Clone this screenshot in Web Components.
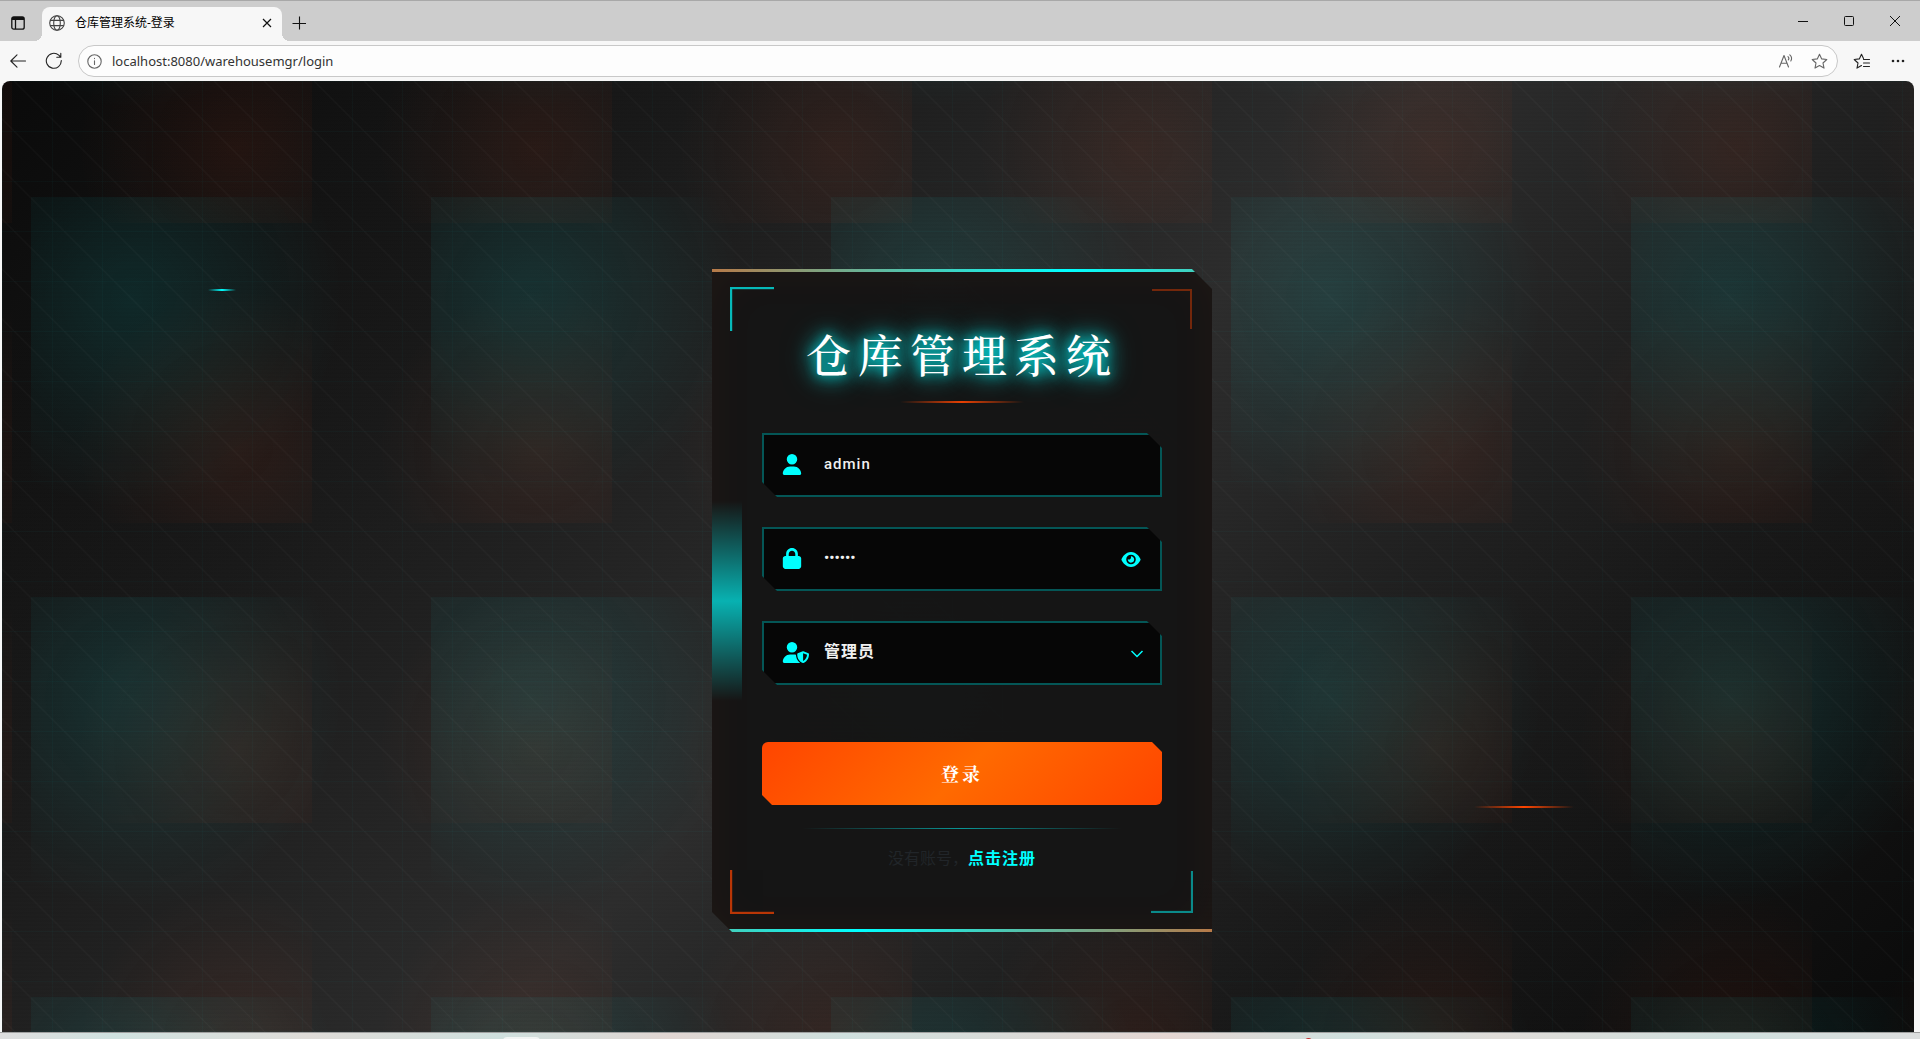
<!DOCTYPE html>
<html lang="zh-CN">
<head>
<meta charset="utf-8">
<meta name="viewport" content="width=device-width, initial-scale=1">
<title>仓库管理系统-登录</title>
<style>
  html, body { height: 100%; }
  body {
    margin: 0;
    display: flex;
    flex-direction: column;
    background: #f7f7f7;
    font-family: "Noto Sans", "Noto Sans CJK SC", sans-serif;
    overflow: hidden;
  }
  login-stage { flex: 1; }
</style>
</head>
<body>
<browser-tabs>仓库管理系统-登录</browser-tabs>
<browser-toolbar url="localhost:8080/warehousemgr/login"></browser-toolbar>
<login-stage><login-card heading="仓库管理系统"></login-card></login-stage>
<desktop-edge></desktop-edge>

<script>
const define = (name, html, setup) => {
  const template = document.createElement('template');
  template.innerHTML = html;
  customElements.define(name, class extends HTMLElement {
    constructor() {
      super();
      this.attachShadow({ mode: 'open' }).append(template.content.cloneNode(true));
    }
    connectedCallback() { if (setup) setup(this, this.shadowRoot); }
  });
};

/* Tab strip with window controls */
define('browser-tabs', `
<style>
  :host { display: flex; align-items: stretch; height: 41px; box-sizing: border-box; background: #cdcdcd; border-top: 1px solid #a8a8a8; color: #111; padding-top: 6px; }
  button { border: 0; padding: 0; margin: 0; background: none; color: inherit; display: flex; align-items: center; justify-content: center; }
  svg { display: block; fill: none; stroke: currentColor; }
  .menu { width: 36px; padding-bottom: 3px; }
  .tab { position: relative; display: flex; align-items: center; gap: 10px; box-sizing: border-box; width: 240px; margin-left: 6px; padding: 0 10px 2px 7px; border-radius: 8px 8px 0 0; background: #f7f7f7; }
  .tab::before, .tab::after { content: ""; position: absolute; bottom: 0; width: 8px; height: 8px; }
  .tab::before { right: 100%; background: radial-gradient(circle at 0 0, transparent 8px, #f7f7f7 8px); }
  .tab::after { left: 100%; background: radial-gradient(circle at 100% 0, transparent 8px, #f7f7f7 8px); }
  .name { flex: 1; font-size: 12px; line-height: 16px; color: #000; white-space: nowrap; }
  .tab .globe { color: #444; }
  .plus { width: 34px; padding-bottom: 2px; }
  .controls { margin-left: auto; display: flex; padding-right: 2px; }
  .controls button { width: 46px; padding-bottom: 6px; }
</style>
<button class="menu" aria-label="标签页操作">
  <svg width="14" height="14" viewBox="0 0 14 14" stroke-width="1.3"><rect x=".8" y=".8" width="12.4" height="12.4" rx="2"/><path d="M1 2.500h12" stroke-width="3"/><path d="M4.500 3v10"/></svg>
</button>
<div class="tab">
  <svg class="globe" width="16" height="16" viewBox="0 0 16 16" stroke-width="1.1"><circle cx="8" cy="8" r="7.3"/><ellipse cx="8" cy="8" rx="3.3" ry="7.3"/><path d="M1.2 5.4h13.6M1.2 10.6h13.6"/></svg>
  <span class="name"><slot></slot></span>
  <button aria-label="关闭标签页"><svg width="10" height="10" viewBox="0 0 10 10" stroke-width="1.2"><path d="M1 1l8 8M9 1l-8 8"/></svg></button>
</div>
<button class="plus" aria-label="新建标签页"><svg width="14" height="14" viewBox="0 0 14 14" stroke-width="1.1"><path d="M7.500 .5v13M.5 7.500h14"/></svg></button>
<div class="controls">
  <button aria-label="最小化"><svg width="10" height="10" viewBox="0 0 10 10"><path d="M0 5.500h10"/></svg></button>
  <button aria-label="最大化"><svg width="10" height="10" viewBox="0 0 10 10"><rect x=".5" y=".5" width="9" height="9" rx="1"/></svg></button>
  <button aria-label="关闭"><svg width="10" height="10" viewBox="0 0 10 10"><path d="M0 0l10 10M10 0L0 10"/></svg></button>
</div>`);

/* Navigation buttons and address field */
define('browser-toolbar', `
<style>
  :host { display: flex; align-items: center; height: 40px; background: #f7f7f7; color: #222; padding-right: 4px; }
  button { border: 0; padding: 0; margin: 0; background: none; color: inherit; display: flex; align-items: center; justify-content: center; width: 36px; height: 32px; }
  svg { display: block; fill: none; stroke: currentColor; stroke-width: 1.1; stroke-linejoin: round; stroke-linecap: round; }
  .address { flex: 1; display: flex; align-items: center; box-sizing: border-box; height: 32px; margin: 0 6px; padding-right: 2px; border: 1px solid #c8c8c8; border-radius: 16px; background: #fdfdfd; }
  .address button { height: 30px; width: 32px; color: #666; }
  .address button.info { width: 30px; }
  input { flex: 1; min-width: 0; border: 0; padding: 0 0 0 3px; outline: 0; background: none; color: #333; font: 13px/20px "Noto Sans", sans-serif; }
</style>
<button aria-label="后退"><svg width="16" height="14" viewBox="0 0 16 14"><path d="M15.500 7H1M7 .8L.8 7l6.200 6.200"/></svg></button>
<button aria-label="刷新"><svg width="18" height="18" viewBox="0 0 18 18"><path d="M16.300 8.500A7.500 7.500 0 1 1 13.800 3.200L15.500 5M15.800 1.300V5.200H11.800"/></svg></button>
<div class="address">
  <button class="info" aria-label="站点信息"><svg width="15" height="15" viewBox="0 0 15 15"><circle cx="7.500" cy="7.500" r="6.700"/><path d="M7.500 6.800v3.700M7.500 4.400v.2"/></svg></button>
  <input id="url" type="text" aria-label="地址" spellcheck="false">
  <button aria-label="大声朗读"><svg width="18" height="16" viewBox="0 0 18 16"><path d="M1.500 14L6 2.500 10.500 14M3 10.200h6M10 3.600c1 .9 1 2.300.3 3.200M11.800 1.800c2 1.700 2.200 4 1 6.200"/></svg></button>
  <button aria-label="收藏"><svg width="17" height="17" viewBox="0 0 17 17"><path d="M8.500 1.200l2.200 4.700 5.100.6-3.800 3.500 1 5.100-4.500-2.500L4 15.100l1-5.100L1.200 6.500l5.100-.6z"/></svg></button>
</div>
<button aria-label="收藏夹"><svg width="18" height="17" viewBox="0 0 18 17"><path d="M8.500 12.500l-4.500 2.600 1-5.100L1.200 6.500l5.100-.6 2.200-4.700 2 4.200M10.500 6.500h6M10.500 10h6M10.500 13.500h6"/></svg></button>
<button aria-label="更多"><svg width="14" height="4" viewBox="0 0 14 4" style="fill:currentColor;stroke:none"><circle cx="2" cy="2" r="1.300"/><circle cx="7" cy="2" r="1.300"/><circle cx="12" cy="2" r="1.300"/></svg></button>`,
(host, root) => { root.getElementById('url').value = host.getAttribute('url'); });

/* Dark backdrop: base gradient, glow tiles, diagonal hatch, grid, scan lines */
define('login-stage', `
<style>
  :host { display: flex; justify-content: center; align-items: flex-start; position: relative; box-sizing: border-box; min-height: 0; margin: 0 6px 0 2px; padding: 188px 0 0 8px; border-radius: 8px 8px 0 0; overflow: hidden;
    background:
      repeating-linear-gradient(0deg, transparent 0 2px, rgba(0,0,0,.03) 2px 4px),
      linear-gradient(90deg, rgba(0,255,255,.025) 1px, transparent 1px) 0 0 / 50px 50px,
      linear-gradient(rgba(0,255,255,.025) 1px, transparent 1px) 0 0 / 50px 50px,
      linear-gradient(45deg, transparent 48%, rgba(255,255,255,.025) 50%, transparent 52%) 12px 0 / 50px 50px,
      radial-gradient(circle at 25% 25%, rgba(0,255,255,.1) 0, transparent 50%) 29px 116px / 400px 400px,
      radial-gradient(circle at 75% 75%, rgba(255,64,16,.08) 0, transparent 50%) 10px 142px / 300px 300px,
      linear-gradient(135deg, #0a0a0a 0, #1a1a1a 25%, #2d2d2d 50%, #1a1a1a 75%, #0a0a0a 100%);
  }
  .spark { position: absolute; height: 2px; }
  .cyan { left: 206px; top: 208px; width: 28px; background: linear-gradient(90deg, transparent, #0ff, transparent); }
  .orange { left: 1472px; top: 725px; width: 100px; background: linear-gradient(90deg, transparent, #ff4500, transparent); }
</style>
<i class="spark cyan"></i><i class="spark orange"></i>
<slot></slot>`);

/* Notched field frame: slots for the icon label, the control and an action */
define('cyber-field', `
<style>
  :host { display: flex; align-items: center; box-sizing: border-box; height: 64px; padding: 0 18px; border: 2px solid rgba(0,255,255,.32); background: #060606;
    clip-path: polygon(0 0, calc(100% - 15px) 0, 100% 15px, 100% 100%, 15px 100%, 0 calc(100% - 15px)); }
  .icon { flex: none; width: 42px; color: #0ff; }
  .control { flex: 1; min-width: 0; display: flex; padding-bottom: 2px; }
  .action { color: #0ff; display: flex; }
</style>
<div class="icon"><slot name="icon"></slot></div>
<div class="control"><slot></slot></div>
<div class="action"><slot name="action"></slot></div>`);

define('login-card', `
<style>
  :host { display: block; position: relative; box-sizing: border-box; width: 500px; max-width: 100%; padding: 52px 50px 63px; background: rgba(21,21,21,.97);
    box-shadow: inset 0 0 50px rgba(255,69,0,.05);
    clip-path: polygon(0 0, calc(100% - 20px) 0, 100% 20px, 100% 100%, 20px 100%, 0 calc(100% - 20px)); }
  .edge { position: absolute; left: 0; right: 0; height: 3px; background: linear-gradient(90deg, #ff4500 -28%, #0ff 71%, #ff4500 170%); }
  .edge.top { top: 0; }
  .edge.bottom { bottom: 0; background: linear-gradient(270deg, #ff4500 -28%, #0ff 71%, #ff4500 170%); }
  .corner { position: absolute; box-sizing: border-box; width: 40px; height: 40px; border: 0 solid #0ff; }
  .tl { top: 20px; left: 20px; border-width: 2px 0 0 2px; opacity: .7; transform: scale(1.1); }
  .tr { top: 20px; right: 20px; border-width: 2px 2px 0 0; border-color: #ff4500; opacity: .4; }
  .bl { bottom: 20px; left: 20px; border-width: 0 0 2px 2px; border-color: #ff4500; opacity: .7; transform: scale(1.1); }
  .br { bottom: 20px; right: 20px; border-width: 0 2px 2px 0; opacity: .5; transform: scale(1.05); }
  .beam { position: absolute; left: 0; top: calc(50% - 100px); width: 30px; height: 200px; opacity: .67; background: linear-gradient(transparent, #0ff, transparent); }
  h1 { margin: 0; font: 500 45px/66px "Noto Serif CJK SC", "Noto Serif SC", "Source Han Serif SC", "Noto Sans CJK SC", serif; letter-spacing: 7px; text-align: center; white-space: nowrap; color: #fff; text-shadow: 0 0 12px rgba(0,255,255,.8), 0 0 20px rgba(0,255,255,.9), 0 0 32px rgba(0,255,255,.6); }
  .rule { height: 2px; width: 124px; margin: 14px auto 30px; opacity: .9; background: linear-gradient(90deg, transparent, #ff4500, transparent); }
  form { display: flex; flex-direction: column; gap: 30px; }
  label { display: block; padding-bottom: 1px; }
  svg { display: block; fill: currentColor; }
  input, select { flex: 1; min-width: 0; border: 0; margin: 0; padding: 0; outline: 0; background: none; color: #f0f0f0; appearance: none; height: 40px; }
  input { font: 500 15px/40px Roboto, sans-serif; letter-spacing: 1px; }
  input[type=password] { letter-spacing: 0; }
  select { padding-bottom: 4px; font: 700 16px/36px "Noto Sans CJK SC", sans-serif; letter-spacing: 1px; }
  .eye { border: 0; padding: 0; margin: 0 0 0 8px; background: none; color: #0ff; }
  .chevron { margin-right: -3px; fill: none; stroke: #0ff; stroke-width: 1.500; }
  .submit { display: block; height: 63px; margin: 27px 0 0; padding: 0; border: 0; border-radius: 6px; color: #fff; font: 700 18px/61px "Noto Serif CJK SC", "Noto Serif SC", "Source Han Serif SC", "Noto Sans CJK SC", serif; letter-spacing: 3px;
    background: linear-gradient(135deg, #ff4500 0, #ff6a00 50%, #ff4500 100%);
    clip-path: polygon(0 0, calc(100% - 10px) 0, 100% 10px, 100% 100%, 10px 100%, 0 calc(100% - 10px)); }
  .divider { height: 1px; width: 80%; margin: 23px auto 16px; opacity: .55; background: linear-gradient(90deg, transparent, #0ff, transparent); }
  p { margin: 0; text-align: center; font: 16px/24px "Noto Sans CJK SC", sans-serif; color: #212529; }
  a { color: #0ff; font-weight: 700; letter-spacing: 1px; text-decoration: none; }
</style>
<i class="edge top"></i><i class="edge bottom"></i>
<i class="corner tl"></i><i class="corner tr"></i><i class="corner bl"></i><i class="corner br"></i>
<i class="beam"></i>
<h1></h1>
<div class="rule"></div>
<form>
  <cyber-field>
    <label slot="icon" for="user" aria-label="用户名"><svg width="20" height="21" viewBox="-20 0 488 512"><path d="M224 256A128 128 0 1 0 224 0a128 128 0 1 0 0 256zm-45.700 48C79.800 304 0 383.800 0 482.300 0 498.700 13.300 512 29.700 512h388.600c16.400 0 29.700-13.300 29.700-29.700C448 383.800 368.200 304 269.700 304z"/></svg></label>
    <input id="user" type="text" value="admin" autocomplete="off">
  </cyber-field>
  <cyber-field>
    <label slot="icon" for="pass" aria-label="密码"><svg width="20" height="21" viewBox="-20 0 488 512"><path d="M144 144v48h160v-48c0-44.200-35.800-80-80-80s-80 35.800-80 80zm-64 48v-48C80 64.500 144.500 0 224 0s144 64.500 144 144v48h16c35.300 0 64 28.700 64 64v192c0 35.300-28.700 64-64 64H64c-35.300 0-64-28.700-64-64V256c0-35.300 28.700-64 64-64z"/></svg></label>
    <input id="pass" type="password" value="123456" autocomplete="off">
    <button class="eye" slot="action" type="button" aria-label="显示密码"><svg width="22" height="17" viewBox="-20 0 616 512"><path d="M288 32c-80.800 0-145.500 36.800-192.600 80.600C48.600 156 17.300 208 2.500 243.700c-3.300 7.900-3.300 16.700 0 24.600C17.300 304 48.600 356 95.400 399.400 142.500 443.200 207.200 480 288 480s145.500-36.800 192.600-80.600c46.800-43.500 78.100-95.400 93-131.100 3.300-7.900 3.300-16.700 0-24.600-14.900-35.700-46.200-87.700-93-131.100C433.500 68.800 368.800 32 288 32zM144 256a144 144 0 1 1 288 0 144 144 0 1 1-288 0zm144-64c0 35.300-28.700 64-64 64-7.100 0-13.900-1.200-20.300-3.300-5.500-1.800-11.900 1.600-11.700 7.400.3 6.900 1.300 13.800 3.200 20.700 13.700 51.200 66.400 81.600 117.600 67.900s81.600-66.400 67.900-117.600c-11.100-41.500-47.800-69.400-88.600-71.100-5.800-.2-9.200 6.100-7.400 11.700 2.100 6.400 3.300 13.200 3.300 20.300z"/></svg></button>
  </cyber-field>
  <cyber-field>
    <label slot="icon" for="role" aria-label="角色"><svg width="27" height="21" viewBox="-20 0 660 512"><path d="M224 256A128 128 0 1 0 224 0a128 128 0 1 0 0 256zm-45.700 48C79.800 304 0 383.800 0 482.300 0 498.700 13.300 512 29.700 512h388.600c1.800 0 3.500-.2 5.300-.5-76.300-55.100-99.800-141-103.100-200.200-16.100-4.800-33.100-7.300-50.700-7.300zm308.800-78.300l-120 48C358 277.400 352 286.200 352 296c0 63.300 25.900 168.800 134.800 214.200 5.900 2.500 12.600 2.500 18.500 0C614.100 464.800 640 359.300 640 296c0-9.800-6-18.600-15.100-22.300l-120-48c-5.700-2.300-12.100-2.300-17.800 0zM591.400 312c-3.900 50.700-27.200 116.700-95.400 149.700V273.800z"/></svg></label>
    <select id="role"><option>管理员</option></select>
    <svg class="chevron" slot="action" width="16" height="16" viewBox="0 0 16 16"><path d="M2.500 6L8 11.500 13.500 6"/></svg>
  </cyber-field>
  <button class="submit" type="submit">登录</button>
</form>
<div class="divider"></div>
<p>没有账号，<a href="#register">点击注册</a></p>`,
(host, root) => { root.querySelector('h1').textContent = host.getAttribute('heading'); });

/* Sliver of the desktop taskbar under the window */
define('desktop-edge', `
<style>
  :host { display: block; position: relative; flex: none; height: 7px; box-sizing: border-box; border-top: 1px solid #a0a0a0; overflow: hidden;
    background: linear-gradient(90deg, #dedede 0, #cfe2e0 6%, #dfdcd8 16%, #cfe0de 26%, #e0d6d2 35%, #cfe0de 44%, #e4d6d2 61%, #cfe0de 70%, #dfdcd8 78%, #cfe0de 90%, #dcdede 100%); }
  .app { position: absolute; left: 503px; top: 4px; width: 37px; height: 8px; border-radius: 4px; background: #f2f5f4; }
  .badge { position: absolute; left: 1304px; top: 5px; width: 9px; height: 9px; border-radius: 50%; background: #c42b2b; }
</style>
<i class="app"></i><i class="badge"></i>`);
</script>
</body>
</html>
